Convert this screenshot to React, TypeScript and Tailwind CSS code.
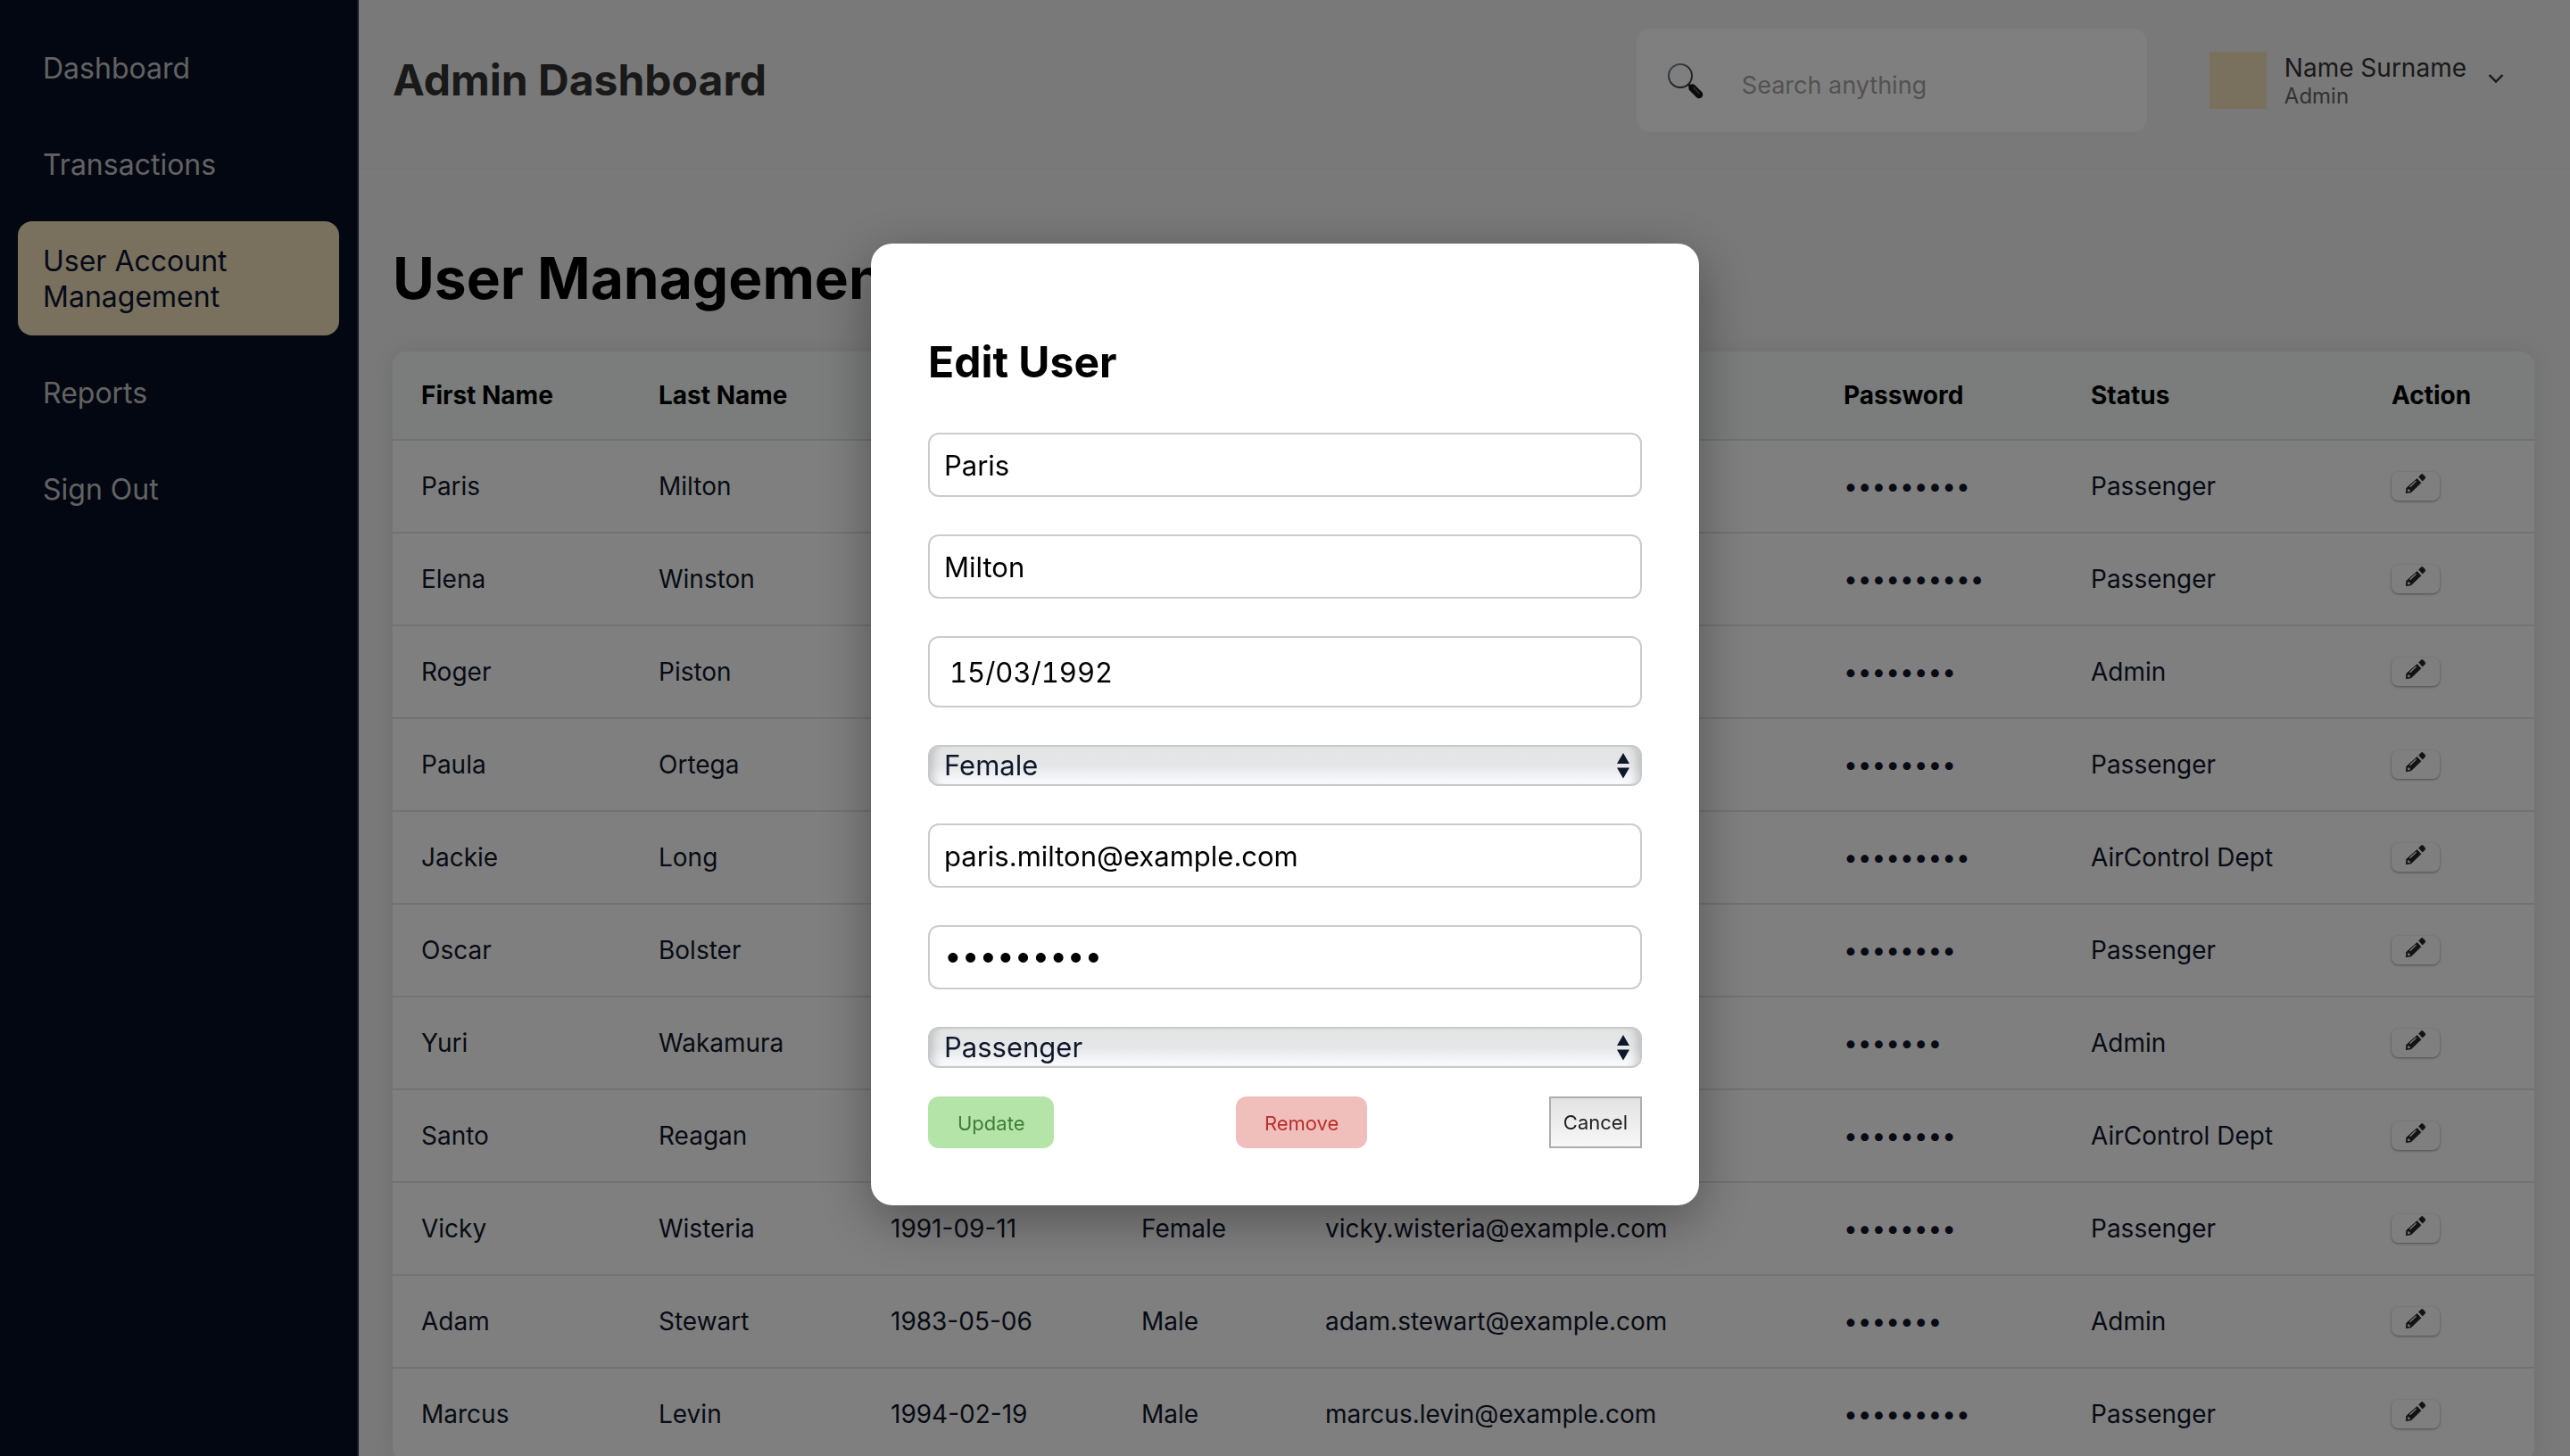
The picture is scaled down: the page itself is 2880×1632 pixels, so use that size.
import React from "react";

const navItems = ["Dashboard", "Transactions", "User Account Management", "Reports", "Sign Out"];

type User = {
  first: string;
  last: string;
  born: string;
  gender: string;
  email: string;
  dots: number;
  status: string;
};

const users: User[] = [
  { first: "Paris", last: "Milton", born: "1992-03-15", gender: "Female", email: "paris.milton@example.com", dots: 9, status: "Passenger" },
  { first: "Elena", last: "Winston", born: "1988-07-22", gender: "Female", email: "elena.winston@example.com", dots: 10, status: "Passenger" },
  { first: "Roger", last: "Piston", born: "1979-11-02", gender: "Male", email: "roger.piston@example.com", dots: 8, status: "Admin" },
  { first: "Paula", last: "Ortega", born: "1995-01-30", gender: "Female", email: "paula.ortega@example.com", dots: 8, status: "Passenger" },
  { first: "Jackie", last: "Long", born: "1985-06-18", gender: "Male", email: "jackie.long@example.com", dots: 9, status: "AirControl Dept" },
  { first: "Oscar", last: "Bolster", born: "1990-12-09", gender: "Male", email: "oscar.bolster@example.com", dots: 8, status: "Passenger" },
  { first: "Yuri", last: "Wakamura", born: "1987-04-25", gender: "Male", email: "yuri.wakamura@example.com", dots: 7, status: "Admin" },
  { first: "Santo", last: "Reagan", born: "1982-08-14", gender: "Male", email: "santo.reagan@example.com", dots: 8, status: "AirControl Dept" },
  { first: "Vicky", last: "Wisteria", born: "1991-09-11", gender: "Female", email: "vicky.wisteria@example.com", dots: 8, status: "Passenger" },
  { first: "Adam", last: "Stewart", born: "1983-05-06", gender: "Male", email: "adam.stewart@example.com", dots: 7, status: "Admin" },
  { first: "Marcus", last: "Levin", born: "1994-02-19", gender: "Male", email: "marcus.levin@example.com", dots: 9, status: "Passenger" },
];

function MagnifierIcon() {
  return (
    <svg viewBox="0 0 44 44" className="size-11 shrink-0" aria-hidden="true">
      <defs>
        <linearGradient id="rim" x1="0" y1="0" x2="0.6" y2="1">
          <stop offset="0" stopColor="#7f96ae" />
          <stop offset="0.5" stopColor="#5a5f66" />
          <stop offset="1" stopColor="#3a3c40" />
        </linearGradient>
      </defs>
      <circle cx="15" cy="17" r="13" fill="#fff" fillOpacity="0.4" stroke="url(#rim)" strokeWidth="2" />
      <path d="M24 26.500l3 3" stroke="#333" strokeWidth="3" />
      <path d="M28.500 30.500l7.500 7.500" stroke="#16161a" strokeWidth="8.500" strokeLinecap="round" />
      <path d="M30 30l6 6.500" stroke="#5c5c66" strokeWidth="1.500" strokeLinecap="round" />
    </svg>
  );
}

function PencilIcon() {
  return (
    <svg viewBox="0 0 24 24" className="size-6" fill="#262626" stroke="#262626" strokeLinejoin="round" aria-hidden="true">
      <path d="M15.500 4.500 18.500 1.500Q19.500 1 20.500 2L22.500 4.200Q23.300 5.300 22.500 6.200L19.700 9.200Z" strokeWidth="0.500" />
      <path d="M13.700 6.500 18 11.300 7 21.800 1.300 22.800 1.700 17Z" strokeWidth="0.700" />
      <path d="M5.600 15.700 12.600 9.100" fill="none" stroke="#fff" strokeWidth="1.300" />
      <path d="M3 18.500 4.500 18.200 5.200 19.600 6.500 20 5 21 3.500 21.200Z" fill="#fff" stroke="none" />
    </svg>
  );
}

function Sidebar() {
  return (
    <aside className="w-[402px] shrink-0 border-r-2 border-[#2a3048] bg-[#050e24]">
      <nav className="flex flex-col gap-5 px-5 py-8">
        {navItems.map((item) => {
          const active = item === "User Account Management";
          return (
            <a
              key={item}
              href="#"
              aria-current={active ? "page" : undefined}
              className={
                active
                  ? "rounded-2xl bg-[#f3e2bd] px-7 pt-[25px] pb-[23px] text-[32px] leading-10 text-[#0b1533]"
                  : "rounded-2xl px-7 pt-[25px] pb-[23px] text-[32px] leading-10 text-[#c4c4c4]"
              }
            >
              {item}
            </a>
          );
        })}
      </nav>
    </aside>
  );
}

function Header() {
  return (
    <header className="flex h-[190px] items-start justify-between border-b-2 border-[#efefef] pt-8 pr-10 pl-[38px]">
      <h1 className="flex h-[116px] items-center text-[48px] font-bold leading-none text-[#333333]">Admin Dashboard</h1>
      <div className="flex items-center gap-[70px] pr-[34px]">
        <div className="flex h-[116px] w-[572px] items-center gap-10 rounded-2xl bg-white px-[34px]">
          <MagnifierIcon />
          <input
            type="search"
            aria-label="Search anything"
            placeholder="Search anything"
            className="min-w-0 flex-1 pt-3 text-[27px] outline-none placeholder:text-[#a5a5a5]"
          />
        </div>
        <button type="button" className="flex items-center gap-5 text-left text-[#333333]">
          <span className="size-16 bg-[#f3e2bd]" />
          <span className="flex flex-col">
            <span className="text-[28px] leading-9">Name Surname</span>
            <span className="text-[24px] leading-7 text-[#666666]">Admin</span>
          </span>
          <svg viewBox="0 0 18 12" className="mb-1 ml-1 h-3 w-[18px]" fill="none" stroke="#333" strokeWidth="2.400" aria-hidden="true">
            <path d="M1.500 2l7.500 7.500 7.500-7.500" />
          </svg>
        </button>
      </div>
    </header>
  );
}

function UserTable() {
  return (
    <div className="overflow-hidden rounded-2xl bg-white shadow-[0_0_24px_rgba(0,0,0,0.08)]">
      <table className="w-full table-fixed text-left text-[28px] text-[#0f172a]">
        <thead className="bg-[#f5fbf8] text-black">
          <tr className="h-[99px] border-b-2 border-[#e0e4e2]">
            <th className="w-[266px] pl-8 font-bold">First Name</th>
            <th className="w-[260px] pl-8 font-bold">Last Name</th>
            <th className="w-[281px] pl-8 font-bold">Date of Birth</th>
            <th className="w-[206px] pl-8 font-bold">Gender</th>
            <th className="w-[581px] pl-8 font-bold">Email</th>
            <th className="w-[277px] pl-8 font-bold">Password</th>
            <th className="w-[337px] pl-8 font-bold">Status</th>
            <th className="w-[192px] pl-8 font-bold">Action</th>
          </tr>
        </thead>
        <tbody>
          {users.map((u) => (
            <tr key={u.email} className="h-[104px] border-b-2 border-[#e5e5e5]">
              <td className="pl-8">{u.first}</td>
              <td className="pl-8">{u.last}</td>
              <td className="pl-8">{u.born}</td>
              <td className="pl-8">{u.gender}</td>
              <td className="pl-8">{u.email}</td>
              <td className="pl-8">{"•".repeat(u.dots)}</td>
              <td className="pl-8">{u.status}</td>
              <td className="pl-8">
                <button
                  type="button"
                  aria-label={`Edit ${u.first} ${u.last}`}
                  className="flex h-8 w-[54px] items-start justify-center rounded-lg bg-white pt-px shadow-[0_1px_3px_rgba(0,0,0,0.4)]"
                >
                  <PencilIcon />
                </button>
              </td>
            </tr>
          ))}
        </tbody>
      </table>
    </div>
  );
}

const fieldClass = "block w-full rounded-xl border-2 border-[#cccccc] bg-white px-4 text-black outline-none";

function SelectField({ label, value, options }: { label: string; value: string; options: string[] }) {
  return (
    <div className="relative">
      <select
        aria-label={label}
        defaultValue={value}
        className="block h-[46px] w-full appearance-none rounded-xl border-2 border-[#c8c8c8] bg-linear-to-b from-[#e3e5e4] via-[#e5e6e8] to-[#fbfcff] px-4 text-[31px] leading-10 text-[#0f172a] shadow-[inset_10px_0_8px_-6px_rgba(0,0,0,0.16),inset_-10px_0_8px_-6px_rgba(0,0,0,0.16)] outline-none"
      >
        {options.map((o) => (
          <option key={o}>{o}</option>
        ))}
      </select>
      <svg viewBox="0 0 14 30" className="pointer-events-none absolute top-2 right-3.5 h-[30px] w-3.5" fill="#0f172a" aria-hidden="true">
        <path d="M7 1l7 12H0zM7 29.500l7-12H0z" />
      </svg>
    </div>
  );
}

function EditUserDialog() {
  return (
    <div className="fixed inset-0 flex items-center justify-center bg-black/50 pb-2">
      <div
        role="dialog"
        aria-modal="true"
        aria-labelledby="edit-title"
        className="w-[928px] rounded-3xl bg-white p-16 shadow-[0_16px_60px_rgba(0,0,0,0.35)]"
      >
        <h2 id="edit-title" className="mt-10 mb-[50px] text-[48px] font-bold leading-[58px] text-black">
          Edit User
        </h2>
        <form className="flex flex-col gap-[42px]">
          <input aria-label="First name" defaultValue="Paris" className={`${fieldClass} h-[72px] text-[31px]`} />
          <input aria-label="Last name" defaultValue="Milton" className={`${fieldClass} h-[72px] text-[31px]`} />
          <input aria-label="Date of birth" defaultValue="15/03/1992" className={`${fieldClass} h-20 indent-1.5 text-[31px] tabular-nums`} />
          <SelectField label="Gender" value="Female" options={["Female", "Male"]} />
          <input type="email" aria-label="Email" defaultValue="paris.milton@example.com" className={`${fieldClass} h-[72px] text-[31px]`} />
          <input type="password" aria-label="Password" defaultValue="paris1234" className={`${fieldClass} h-[72px] pb-1 text-[35px]`} />
          <SelectField label="Status" value="Passenger" options={["Passenger", "Admin", "AirControl Dept"]} />
        </form>
        <div className="mt-8 flex justify-between text-[22px]">
          <button type="button" className="h-[58px] rounded-xl bg-[#b5e4a8] px-[33px] pt-0.5 text-[#3e7f3a]">
            Update
          </button>
          <button type="button" className="h-[58px] rounded-xl bg-[#f0bebb] px-8 pt-0.5 text-[#b92f2c]">
            Remove
          </button>
          <button
            type="button"
            className="h-[58px] border-2 border-[#adadad] bg-linear-to-b from-[#e3e3e3] to-[#f7f7f7] px-3.5 text-[#222222]"
          >
            Cancel
          </button>
        </div>
      </div>
    </div>
  );
}

export default function App() {
  return (
    <div className="h-screen overflow-hidden bg-[#f2f2f2] font-['Inter',sans-serif]">
      <div className="flex min-h-full">
        <Sidebar />
        <div className="min-w-0 flex-1">
          <Header />
          <main className="pt-[81px] pr-10 pl-[38px]">
            <h2 className="mb-[41px] text-[64px] font-bold leading-[82px] text-black">User Management</h2>
            <UserTable />
          </main>
        </div>
      </div>
      <EditUserDialog />
    </div>
  );
}
